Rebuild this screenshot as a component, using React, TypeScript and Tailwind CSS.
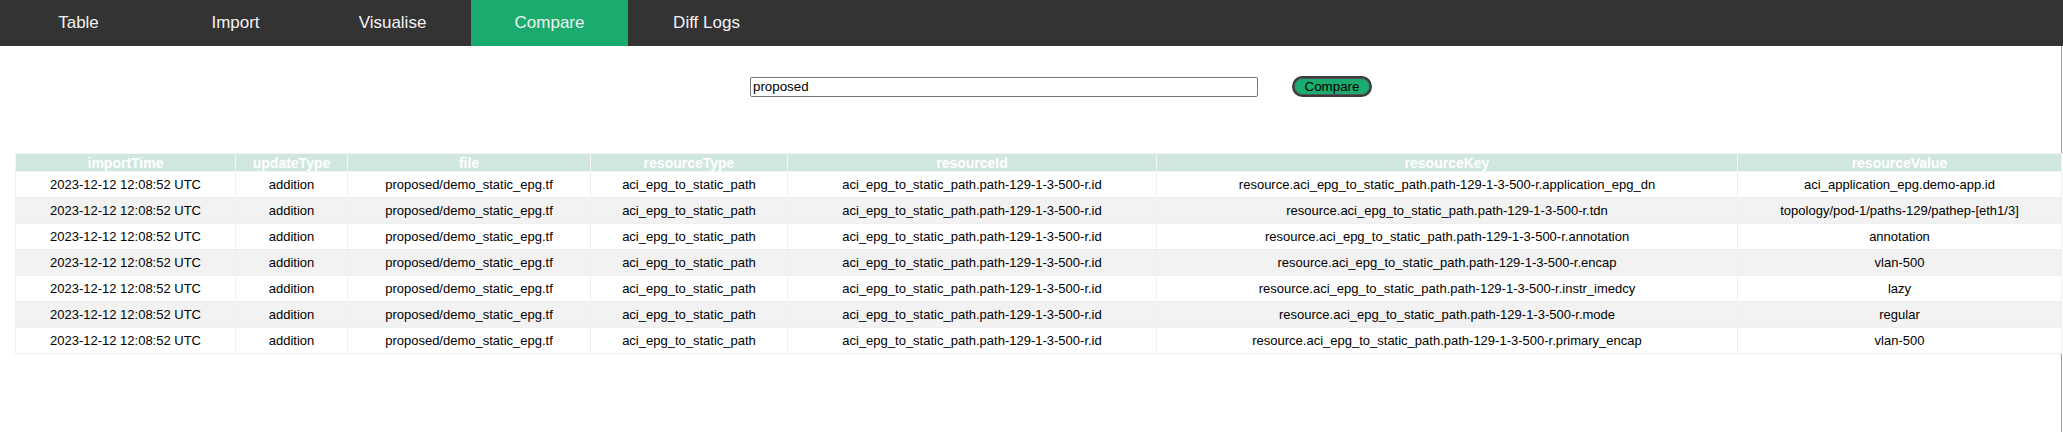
import React from "react";

export default function App() {
  const tabs = ["Table", "Import", "Visualise", "Compare", "Diff Logs"];
  const active = "Compare";

  const columns = [
    { name: "importTime", width: "w-[220px]" },
    { name: "updateType", width: "w-[112px]" },
    { name: "file", width: "w-[243px]" },
    { name: "resourceType", width: "w-[197px]" },
    { name: "resourceId", width: "w-[369px]" },
    { name: "resourceKey", width: "w-[581px]" },
    { name: "resourceValue", width: "w-[324px]" },
  ];

  const base = {
    importTime: "2023-12-12 12:08:52 UTC",
    updateType: "addition",
    file: "proposed/demo_static_epg.tf",
    resourceType: "aci_epg_to_static_path",
    resourceId: "aci_epg_to_static_path.path-129-1-3-500-r.id",
  };

  const rows = [
    ["resource.aci_epg_to_static_path.path-129-1-3-500-r.application_epg_dn", "aci_application_epg.demo-app.id"],
    ["resource.aci_epg_to_static_path.path-129-1-3-500-r.tdn", "topology/pod-1/paths-129/pathep-[eth1/3]"],
    ["resource.aci_epg_to_static_path.path-129-1-3-500-r.annotation", "annotation"],
    ["resource.aci_epg_to_static_path.path-129-1-3-500-r.encap", "vlan-500"],
    ["resource.aci_epg_to_static_path.path-129-1-3-500-r.instr_imedcy", "lazy"],
    ["resource.aci_epg_to_static_path.path-129-1-3-500-r.mode", "regular"],
    ["resource.aci_epg_to_static_path.path-129-1-3-500-r.primary_encap", "vlan-500"],
  ];

  return (
    <div className="min-h-[432px] bg-white font-['Liberation_Sans',Arial,sans-serif] flex flex-col">
      {/* Top navigation */}
      <nav className="flex h-[46px] bg-[#333333]">
        {tabs.map((tab) => (
          <a
            key={tab}
            href="#"
            className={`w-[157px] flex items-center justify-center text-[17px] text-[#f2f2f2] ${
              tab === active ? "bg-[#1aab6e]" : ""
            }`}
          >
            {tab}
          </a>
        ))}
      </nav>

      <main className="flex-1 w-[2062px] border-r border-[#9a9a9a]">
        {/* Compare form */}
        <div className="flex items-center pl-[750px] pt-[30px]">
          <input
            type="text"
            defaultValue="proposed"
            className="w-[508px] h-[20px] border border-[#767676] rounded-[2px] px-[2px] text-[13.33px] text-black outline-none"
          />
          <button className="ml-[34px] w-[80px] h-[21px] rounded-full border-2 border-[#3a3a3a] bg-[#1aab6e] text-[13.33px] text-black leading-none shadow-[inset_0_0_0_1px_#555555]">
            Compare
          </button>
        </div>

        {/* Diff table */}
        <div className="pl-[15px] pt-[56px]">
          <table className="table-fixed w-[2046px] border-collapse text-center">
            <colgroup>
              {columns.map((c) => (
                <col key={c.name} className={c.width} />
              ))}
            </colgroup>
            <thead>
              <tr className="h-[18px] bg-[#cfe7df]">
                {columns.map((c) => (
                  <th
                    key={c.name}
                    className="border border-[#f4f4f4] p-0 text-[14px] font-bold text-white leading-[16px]"
                  >
                    {c.name}
                  </th>
                ))}
              </tr>
            </thead>
            <tbody>
              {rows.map(([key, value], i) => (
                <tr key={key} className={`h-[26px] ${i % 2 === 1 ? "bg-[#f2f2f2]" : "bg-white"}`}>
                  <td className="border border-[#efefef] p-0 text-[13px] text-black">{base.importTime}</td>
                  <td className="border border-[#efefef] p-0 text-[13px] text-black">{base.updateType}</td>
                  <td className="border border-[#efefef] p-0 text-[13px] text-black">{base.file}</td>
                  <td className="border border-[#efefef] p-0 text-[13px] text-black">{base.resourceType}</td>
                  <td className="border border-[#efefef] p-0 text-[13px] text-black">{base.resourceId}</td>
                  <td className="border border-[#efefef] p-0 text-[13px] text-black">{key}</td>
                  <td className="border border-[#efefef] p-0 text-[13px] text-black">{value}</td>
                </tr>
              ))}
            </tbody>
          </table>
        </div>
      </main>
    </div>
  );
}
